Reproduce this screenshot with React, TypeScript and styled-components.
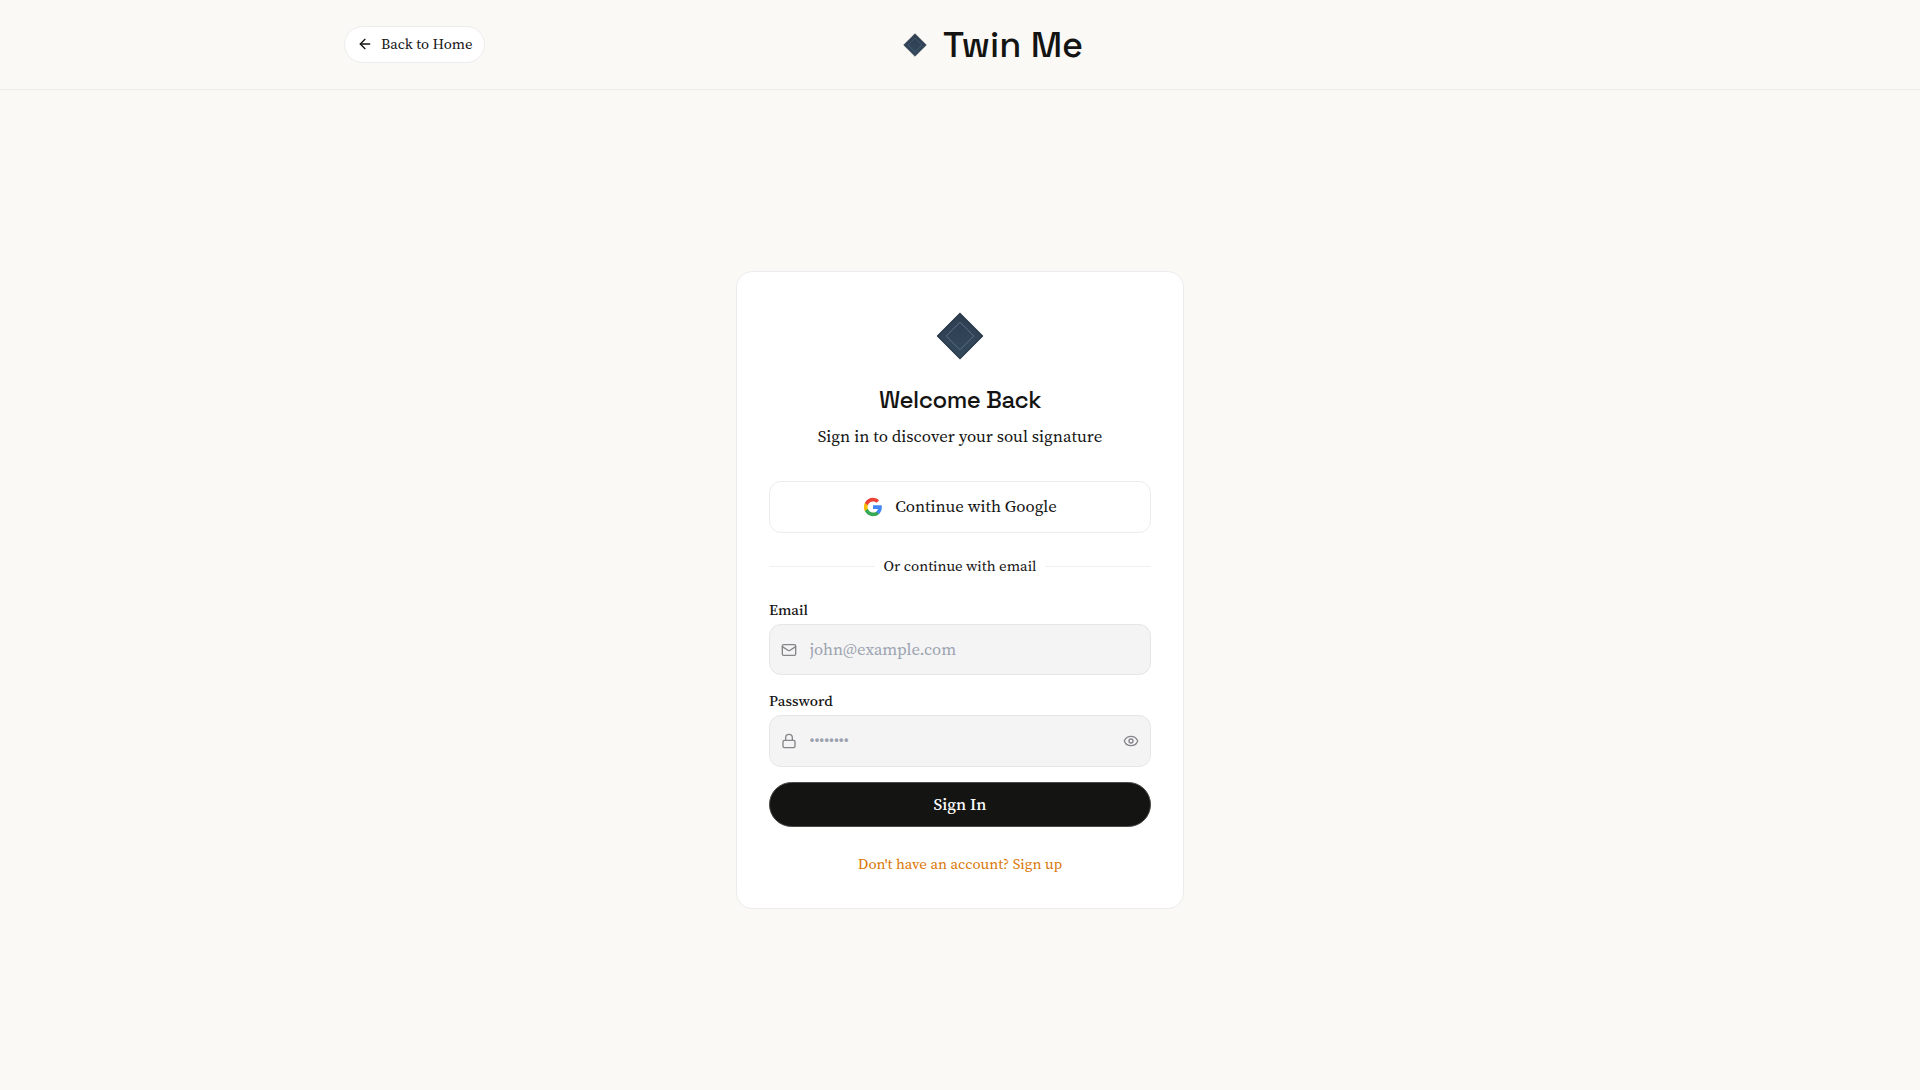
import React, { useState } from 'react';
import styled, { createGlobalStyle } from 'styled-components';
import { ArrowLeft, Eye, Lock, Mail } from 'lucide-react';

const serif = `'Source Serif 4', 'Liberation Serif', 'Times New Roman', serif`;
const grotesk = `'Space Grotesk', Inter, 'Liberation Sans', sans-serif`;

const GlobalStyle = createGlobalStyle`
  *, *::before, *::after { box-sizing: border-box; }
  body { margin: 0; background: #faf9f5; color: #141413; font-family: ${serif}; }
  button, input { font: inherit; color: inherit; }
  button { cursor: pointer; }
`;

const Page = styled.div`
  min-height: 100vh;
  display: flex;
  flex-direction: column;
`;

const Header = styled.header`
  height: 90px;
  border-bottom: 1px solid #ececea;
`;

const HeaderInner = styled.div`
  max-width: 1280px;
  height: 100%;
  margin: 0 auto;
  padding: 0 24px;
  display: flex;
  align-items: center;
  justify-content: space-between;
`;

const BackButton = styled.button`
  width: 141px;
  height: 37px;
  padding: 0 0 1px 12px;
  display: flex;
  align-items: center;
  gap: 8px;
  border: 1px solid #ececee;
  border-radius: 19px;
  background: #fff;
  font-size: 14.7px;
  line-height: 20px;
  white-space: nowrap;
`;

const Brand = styled.div`
  width: 183px;
  display: flex;
  align-items: center;
  gap: 12px;
  svg { flex: none; }
`;

const BrandName = styled.span`
  font-family: ${grotesk};
  font-size: 36px;
  font-weight: 500;
  line-height: 40px;
  white-space: nowrap;
`;

const HeaderSpacer = styled.div`
  width: 80px;
`;

const Main = styled.main`
  flex: 1;
  display: flex;
  align-items: center;
  justify-content: center;
`;

const Card = styled.section`
  width: 448px;
  height: 638px;
  padding: 32px;
  display: flex;
  flex-direction: column;
  border: 1px solid #ececee;
  border-radius: 16px;
  background: #fff;
`;

const Intro = styled.div`
  display: flex;
  flex-direction: column;
  align-items: center;
`;

const Title = styled.h1`
  margin: 16px 0 9px;
  font-family: ${grotesk};
  font-size: 24px;
  font-weight: 500;
  line-height: 32px;
  letter-spacing: -0.48px;
`;

const Subtitle = styled.p`
  margin: 0;
  font-size: 16.8px;
  line-height: 24px;
`;

const GoogleButton = styled.button`
  height: 52px;
  margin-top: 32px;
  padding-bottom: 2px;
  display: flex;
  align-items: center;
  justify-content: center;
  gap: 12px;
  border: 1px solid #ececee;
  border-radius: 12px;
  background: #fff;
  font-size: 16.75px;
  line-height: 24px;
  svg { margin-top: 1px; }
`;

const Divider = styled.div`
  height: 20px;
  margin: 23px 0 24px;
  display: flex;
  align-items: center;
  gap: 8px;
  font-size: 14.9px;
  line-height: 20px;
  white-space: nowrap;
  &::before, &::after {
    content: '';
    flex: 1;
    height: 1px;
    background: #f0f0f0;
  }
`;

const Form = styled.form`
  display: flex;
  flex-direction: column;
`;

const Field = styled.div<{ $after: number }>`
  display: flex;
  flex-direction: column;
  gap: 4px;
  margin-bottom: ${(p) => p.$after}px;
`;

const Label = styled.label`
  font-size: 14.9px;
  font-weight: 500;
  line-height: 20px;
`;

const InputBox = styled.div<{ $height: number }>`
  height: ${(p) => p.$height}px;
  padding: 0 11px 0 10.5px;
  display: flex;
  align-items: center;
  gap: 13px;
  border: 1px solid #e6e6e7;
  border-radius: 12px;
  background: #f4f4f5;
  color: #85858a;
  svg { flex: none; }
`;

const Input = styled.input`
  flex: 1;
  min-width: 0;
  height: 100%;
  padding: 0 0 1px;
  border: 0;
  outline: 0;
  background: transparent;
  color: #141413;
  font-size: 16.6px;
  &::placeholder {
    color: #9ca3af;
    opacity: 1;
  }
  &#password::placeholder {
    font-size: 16px;
  }
`;

const IconButton = styled.button`
  display: flex;
  padding: 0;
  border: 0;
  background: none;
  color: inherit;
`;

const SubmitButton = styled.button`
  height: 45px;
  padding: 0 0 1px;
  border: 1px solid #4a4a49;
  border-radius: 23px;
  background: #141413;
  color: #fff;
  font-size: 16.75px;
  font-weight: 500;
`;

const SignUpLink = styled.button`
  align-self: center;
  height: 20px;
  margin-top: 27px;
  padding: 0;
  border: 0;
  background: none;
  color: #d97706;
  font-size: 14.9px;
  line-height: 20px;
`;

function Diamond({ size }: { size: number }) {
  const id = `diamond-${size}`;
  return (
    <svg width={size} height={size} viewBox="0 0 64 64">
      <defs>
        <linearGradient id={id} x1="0" y1="0" x2="0" y2="1">
          <stop offset="0" stopColor="#2d3e50" />
          <stop offset="1" stopColor="#34495e" />
        </linearGradient>
      </defs>
      <path d="M32 9.4 54.6 32 32 54.6 9.4 32Z" fill={`url(#${id})`} stroke="#22303d" strokeWidth="1.1" />
      <path d="M32 18.2 45.8 32 32 45.8 18.2 32Z" fill="none" stroke="#5d6f80" strokeWidth="1" />
    </svg>
  );
}

function GoogleLogo() {
  return (
    <svg width="20" height="20" viewBox="0 0 24 24">
      <path fill="#4285F4" d="M22.56 12.25c0-.78-.07-1.53-.2-2.25H12v4.26h5.92c-.26 1.37-1.04 2.53-2.21 3.31v2.77h3.57c2.08-1.92 3.28-4.74 3.28-8.09z" />
      <path fill="#34A853" d="M12 23c2.97 0 5.46-.98 7.28-2.66l-3.57-2.77c-.98.66-2.23 1.06-3.71 1.06-2.86 0-5.29-1.93-6.16-4.53H2.18v2.84C3.99 20.53 7.7 23 12 23z" />
      <path fill="#FBBC05" d="M5.84 14.09c-.22-.66-.35-1.36-.35-2.09s.13-1.43.35-2.09V7.07H2.18C1.43 8.55 1 10.22 1 12s.43 3.45 1.18 4.93l3.66-2.84z" />
      <path fill="#EA4335" d="M12 5.38c1.62 0 3.06.56 4.21 1.64l3.15-3.15C17.45 2.09 14.97 1 12 1 7.7 1 3.99 3.47 2.18 7.07l3.66 2.84c.87-2.6 3.3-4.53 6.16-4.53z" />
    </svg>
  );
}

export default function App() {
  const [visible, setVisible] = useState(false);
  return (
    <Page>
      <GlobalStyle />
      <Header>
        <HeaderInner>
          <BackButton>
            <ArrowLeft size={16} />
            Back to Home
          </BackButton>
          <Brand>
            <Diamond size={32} />
            <BrandName>Twin Me</BrandName>
          </Brand>
          <HeaderSpacer />
        </HeaderInner>
      </Header>
      <Main>
        <Card>
          <Intro>
            <Diamond size={64} />
            <Title>Welcome Back</Title>
            <Subtitle>Sign in to discover your soul signature</Subtitle>
          </Intro>
          <GoogleButton>
            <GoogleLogo />
            Continue with Google
          </GoogleButton>
          <Divider>Or continue with email</Divider>
          <Form onSubmit={(e) => e.preventDefault()}>
            <Field $after={16}>
              <Label htmlFor="email">Email</Label>
              <InputBox $height={51}>
                <Mail size={16} />
                <Input id="email" type="email" placeholder="john@example.com" />
              </InputBox>
            </Field>
            <Field $after={15}>
              <Label htmlFor="password">Password</Label>
              <InputBox $height={52}>
                <Lock size={16} />
                <Input id="password" type={visible ? 'text' : 'password'} placeholder="••••••••" />
                <IconButton type="button" aria-label="Toggle password visibility" onClick={() => setVisible(!visible)}>
                  <Eye size={16} />
                </IconButton>
              </InputBox>
            </Field>
            <SubmitButton type="submit">Sign In</SubmitButton>
          </Form>
          <SignUpLink>Don't have an account? Sign up</SignUpLink>
        </Card>
      </Main>
    </Page>
  );
}
